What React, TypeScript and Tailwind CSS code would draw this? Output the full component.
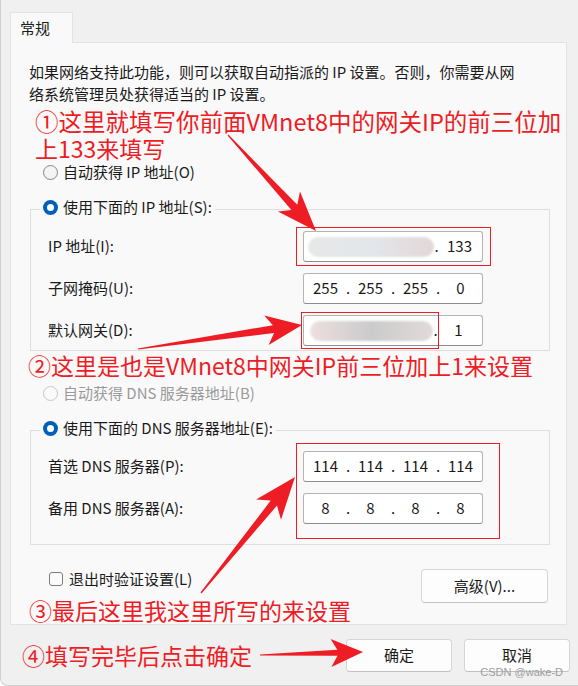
import { Fragment } from "react";

function arrowPoints(
  x1: number,
  y1: number,
  x2: number,
  y2: number,
  head: number,
  wing: number,
  shaft: number,
) {
  const len = Math.hypot(x2 - x1, y2 - y1);
  const ux = (x2 - x1) / len;
  const uy = (y2 - y1) / len;
  const nx = -uy;
  const ny = ux;
  const bx = x2 - ux * head;
  const by = y2 - uy * head;
  const jx = x2 - ux * head * 0.8;
  const jy = y2 - uy * head * 0.8;
  const pts = [
    [x1 + nx * 0.6, y1 + ny * 0.6],
    [jx + nx * shaft, jy + ny * shaft],
    [bx + nx * wing, by + ny * wing],
    [x2, y2],
    [bx - nx * wing, by - ny * wing],
    [jx - nx * shaft, jy - ny * shaft],
    [x1 - nx * 0.6, y1 - ny * 0.6],
  ];
  return pts.map((p) => p.map((v) => v.toFixed(1)).join(",")).join(" ");
}

function Radio({ checked, disabled }: { checked?: boolean; disabled?: boolean }) {
  if (checked) {
    return (
      <span className="flex h-[15px] w-[15px] items-center justify-center rounded-full bg-[#005fb8]">
        <span className="h-[7px] w-[7px] rounded-full bg-white" />
      </span>
    );
  }
  return (
    <span
      className={
        disabled
          ? "h-[15px] w-[15px] rounded-full border border-[#c6c6c6] bg-[#fafafa]"
          : "h-[15px] w-[15px] rounded-full border border-[#858585] bg-[#f4f4f4]"
      }
    />
  );
}

function IpField({ parts }: { parts: string[] }) {
  return (
    <div className="flex h-[31px] w-[180px] items-center rounded-[3px] border border-[#b4b4b4] border-b-[#8e8e8e] bg-white pl-[1px] text-[15px] text-[#1a1a1a]">
      {parts.map((p, i) => (
        <Fragment key={i}>
          {i > 0 ? <span className="w-[4px] text-center">.</span> : null}
          <span className="w-[41px] text-center">{p}</span>
        </Fragment>
      ))}
    </div>
  );
}

function BlurField({ last, gateway }: { last: string; gateway?: boolean }) {
  return (
    <div className="flex h-[31px] w-[180px] items-center rounded-[3px] border border-[#b4b4b4] border-b-[#8e8e8e] bg-white text-[15px] text-[#1a1a1a]">
      {gateway ? (
        <span className="ml-[6px] h-[20px] w-[123px] rounded-full bg-linear-to-r from-[#eddfdf] via-[#cbcbcb] to-[#e2dada] blur-[1px]" />
      ) : (
        <span className="ml-[4px] h-[20px] w-[126px] rounded-full bg-linear-to-r from-[#e7e7e7] via-[#e3e7eb] to-[#e3d7d7] blur-[1px]" />
      )}
      <span className="w-[5px] text-center">.</span>
      <span className="w-[41px] text-center">{last}</span>
    </div>
  );
}

function Row({ label, children }: { label: string; children: React.ReactNode }) {
  return (
    <div className="flex items-center">
      <span className="w-[255px] text-[15px] text-[#1a1a1a]">{label}</span>
      {children}
    </div>
  );
}

function Button({ label, className }: { label: string; className: string }) {
  return (
    <div
      className={
        "flex items-center justify-center rounded-[4px] border border-[#d6d6d6] border-b-[#c2c2c2] bg-[#fdfdfd] text-[15px] text-[#1a1a1a] " +
        className
      }
    >
      {label}
    </div>
  );
}

export default function App() {
  return (
    <div className="relative h-[686px] w-[578px] overflow-hidden rounded-bl-[8px] border-b border-l border-[#cfcfcf] bg-[#f0f0f0] font-['Noto_Sans_CJK_SC',sans-serif]">
      {/* tab */}
      <div className="relative z-10 -mb-px ml-[9px] mt-[12px] flex h-[31px] w-[63px] items-center border border-b-0 border-[#e3e3e3] bg-[#f9f9f9] pl-[9px] text-[15px] text-[#1a1a1a]">
        常规
      </div>

      {/* panel */}
      <div className="ml-[9px] h-[583px] w-[557px] border border-[#e3e3e3] bg-[#f9f9f9] pl-[18px]">
        <p className="mt-[18px] text-[15px] leading-[22px] text-[#1a1a1a]">
          如果网络支持此功能，则可以获取自动指派的 IP 设置。否则，你需要从网
          <br />
          络系统管理员处获得适当的 IP 设置。
        </p>

        <p className="ml-[6px] mt-[3px] whitespace-nowrap text-[23px] leading-[27px] text-[#ee1c25]">
          <span className="text-[23.5px]">①这里就填写你前面VMnet8中的网关IP的前三位加</span>
          <br />
          上133来填写
        </p>

        <div className="-mt-px flex h-[22px] items-center gap-[5px] pl-[14px] text-[15px] text-[#1a1a1a]">
          <Radio />
          <span>自动获得 IP 地址(O)</span>
        </div>

        <div className="ml-px mt-[26px] w-[520px] border border-[#dedede] pb-[4px]">
          <div className="-mt-[14px] ml-[9px] flex h-[22px] w-fit items-center gap-[5px] bg-[#f9f9f9] px-[3px] text-[15px] text-[#1a1a1a]">
            <Radio checked />
            <span>使用下面的 IP 地址(S):</span>
          </div>
          <div className="mt-[13px] flex flex-col gap-[11px] pl-[17px]">
            <Row label="IP 地址(I):">
              <BlurField last="133" />
            </Row>
            <Row label="子网掩码(U):">
              <IpField parts={["255", "255", "255", "0"]} />
            </Row>
            <Row label="默认网关(D):">
              <BlurField last="1" gateway />
            </Row>
          </div>
        </div>

        <p className="-ml-px mt-px whitespace-nowrap text-[23px] leading-[27px] text-[#ee1c25]">
          ②这里是也是VMnet8中网关IP前三位加上1来设置
        </p>

        <div className="mt-[3px] flex h-[22px] items-center gap-[5px] pl-[14px] text-[15px] text-[#9a9a9a]">
          <Radio disabled />
          <span>自动获得 DNS 服务器地址(B)</span>
        </div>

        <div className="ml-px mt-[26px] w-[520px] border border-[#dedede] pb-[20px]">
          <div className="-mt-[14px] ml-[9px] flex h-[22px] w-fit items-center gap-[5px] bg-[#f9f9f9] px-[3px] text-[15px] text-[#1a1a1a]">
            <Radio checked />
            <span>使用下面的 DNS 服务器地址(E):</span>
          </div>
          <div className="mt-[12px] flex flex-col gap-[11px] pl-[17px]">
            <Row label="首选 DNS 服务器(P):">
              <IpField parts={["114", "114", "114", "114"]} />
            </Row>
            <Row label="备用 DNS 服务器(A):">
              <IpField parts={["8", "8", "8", "8"]} />
            </Row>
          </div>
        </div>

        <div className="mt-[23px] flex items-start justify-between pr-[18px]">
          <div className="flex h-[22px] items-center gap-[6px] pl-[20px] text-[15px] text-[#1a1a1a]">
            <span className="h-[14px] w-[14px] rounded-[3px] border border-[#7c7c7c] bg-[#fbfbfb]" />
            <span>退出时验证设置(L)</span>
          </div>
          <Button label="高级(V)..." className="mt-px h-[34px] w-[127px]" />
        </div>

        <p className="-mt-[6px] whitespace-nowrap text-[23px] leading-[27px] text-[#ee1c25]">
          ③最后这里我这里所写的来设置
        </p>
      </div>

      {/* footer */}
      <div className="mt-[14px] flex h-[33px] items-center pl-[21px] pr-[8px]">
        <span className="whitespace-nowrap text-[23px] leading-[27px] text-[#ee1c25]">④填写完毕后点击确定</span>
        <div className="ml-auto flex gap-[12px]">
          <Button label="确定" className="h-[33px] w-[106px]" />
          <Button label="取消" className="h-[33px] w-[106px]" />
        </div>
      </div>

      <span className="absolute bottom-[6px] right-[15px] font-['Liberation_Sans',sans-serif] text-[11px] leading-[14px] text-[#9c9c9c]">
        CSDN @wake-D
      </span>

      {/* annotation overlay */}
      <svg className="pointer-events-none absolute left-0 top-0" width="578" height="686">
        <g fill="none" stroke="#ee1c25" strokeWidth="1">
          <rect x="295.5" y="227.5" width="194" height="38" />
          <rect x="300.5" y="312.5" width="137" height="36" />
          <rect x="295.5" y="443.5" width="203" height="95" />
        </g>
        <g fill="#ee1c25">
          <polygon points={arrowPoints(227, 135, 315, 231, 40, 15, 4)} />
          <polygon points={arrowPoints(137, 349, 301, 325, 36, 15, 4)} />
          <polygon points={arrowPoints(200, 593, 294, 477, 42, 16, 4)} />
          <polygon points={arrowPoints(259, 655, 362, 652, 32, 14, 3)} />
        </g>
      </svg>
    </div>
  );
}
